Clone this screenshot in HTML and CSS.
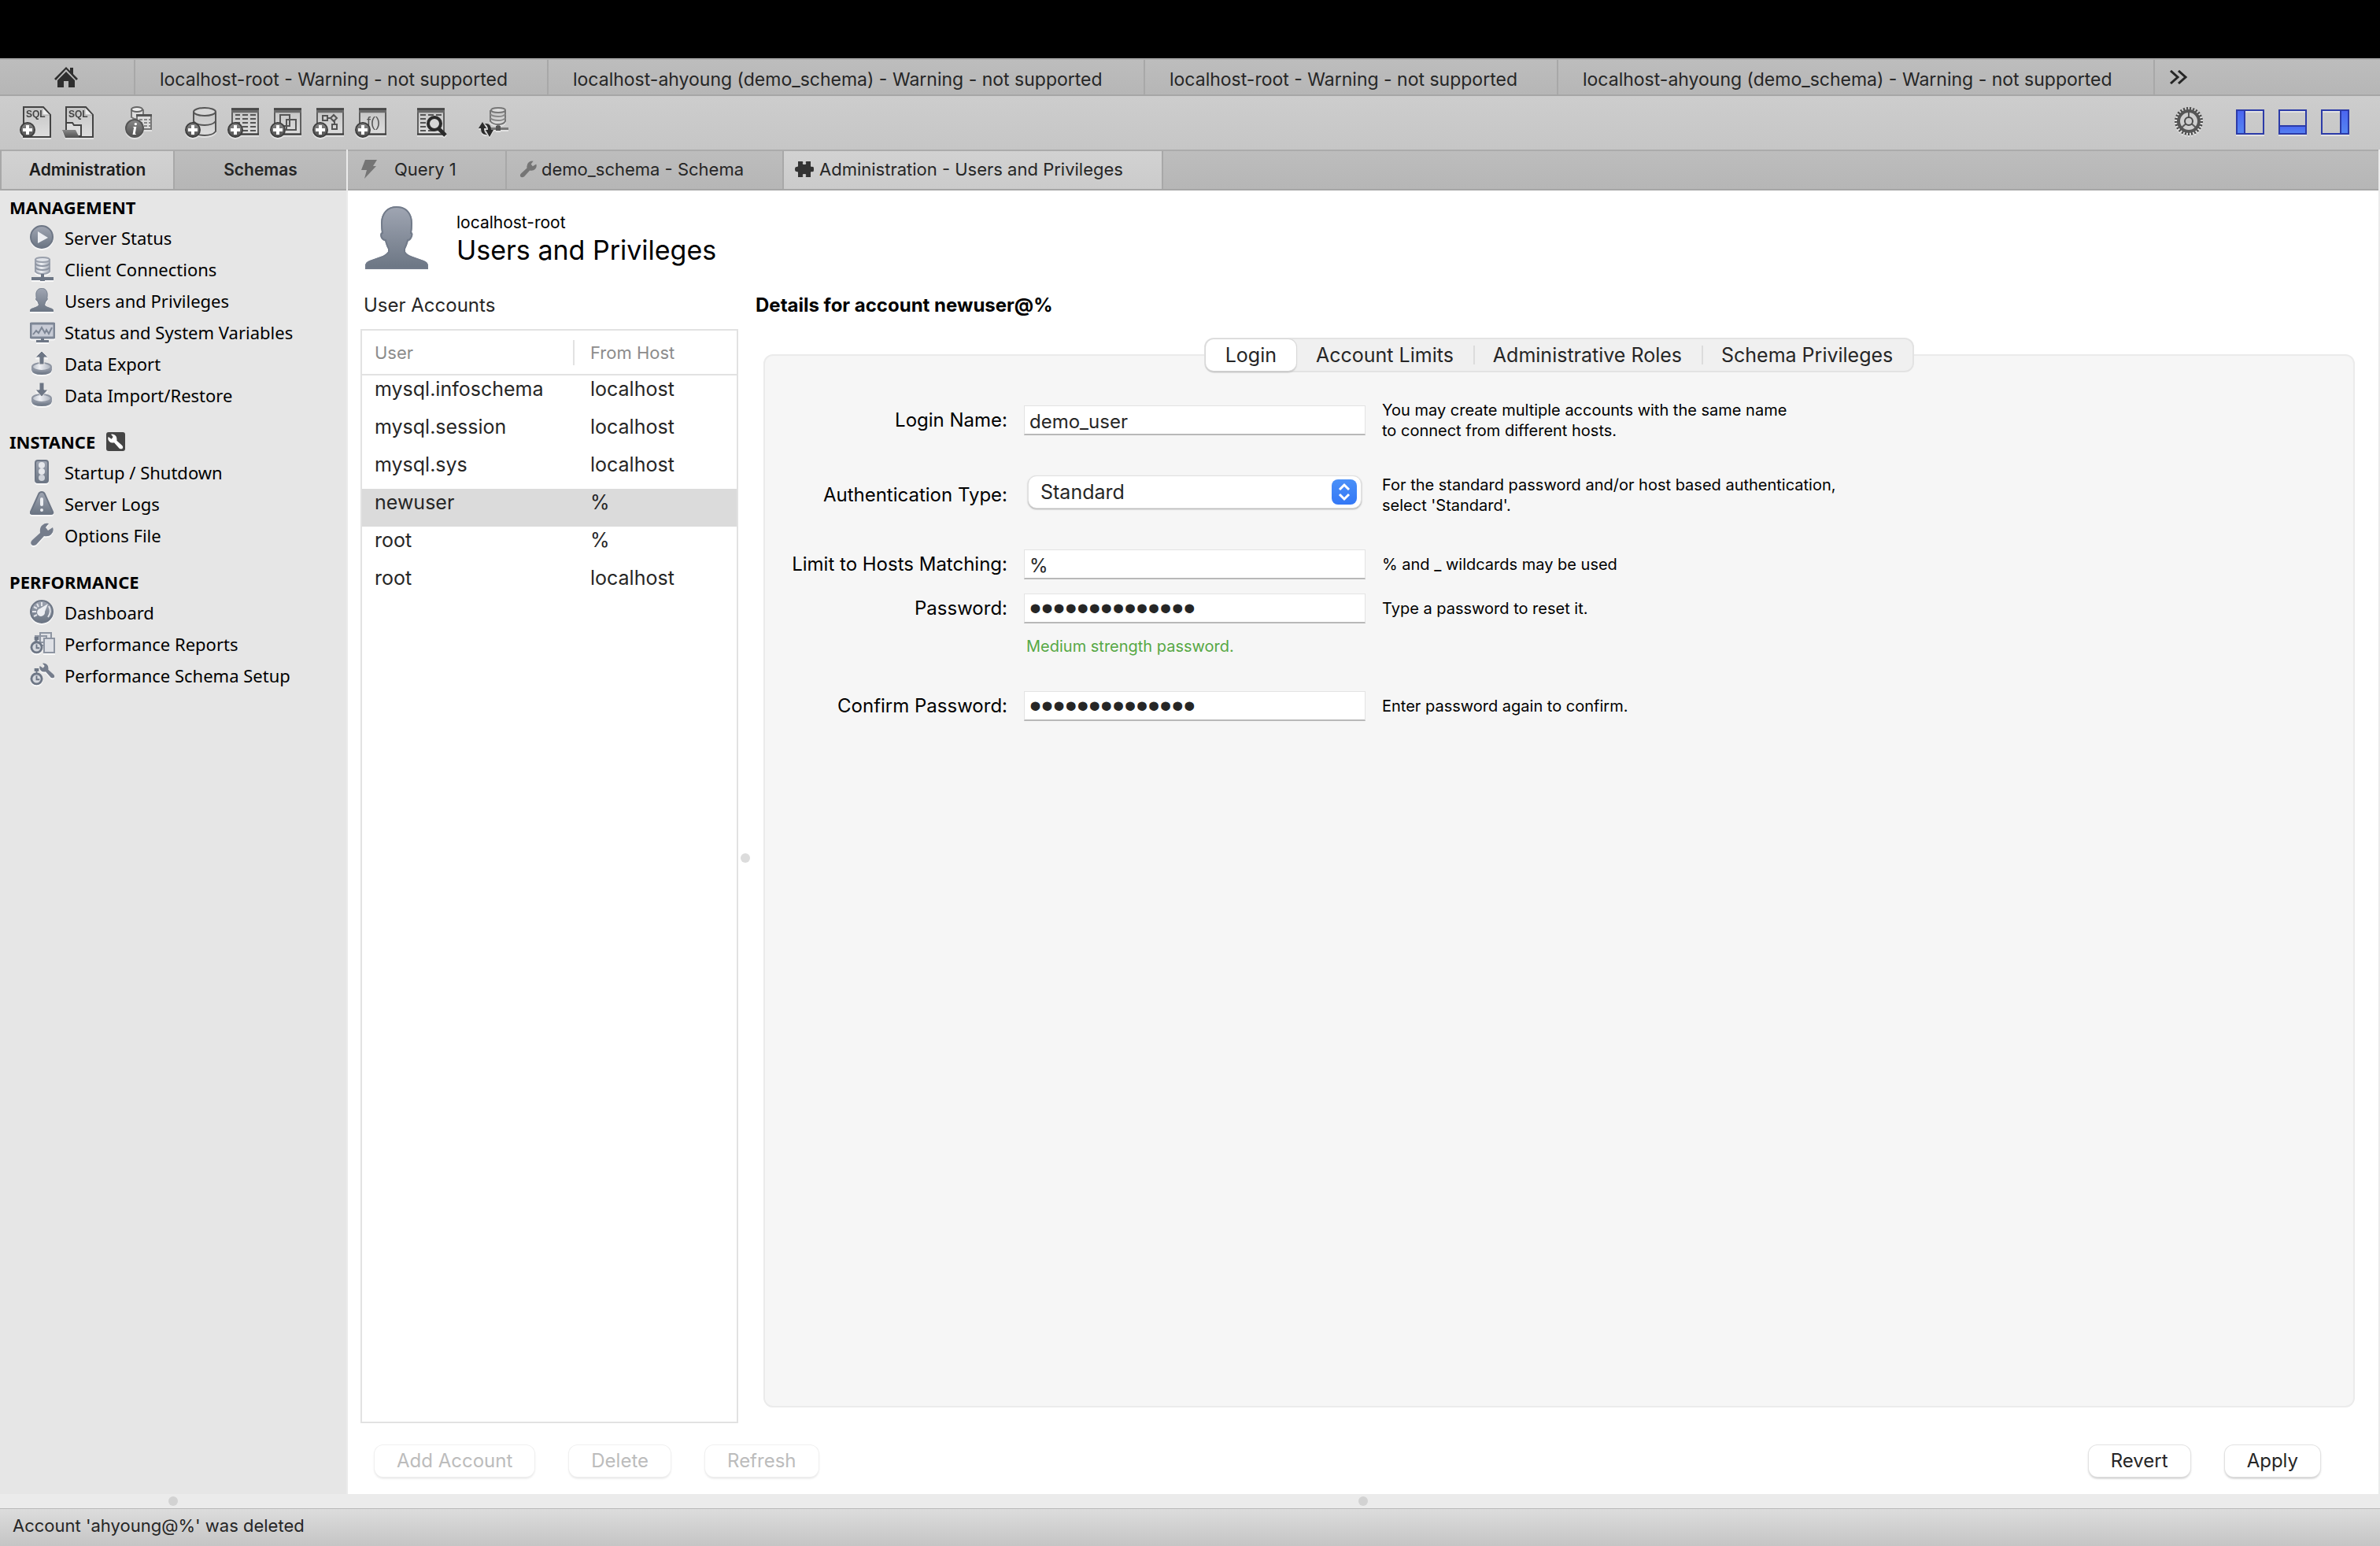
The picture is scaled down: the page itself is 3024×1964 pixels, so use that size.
FILE: index.html
```html
<!DOCTYPE html>
<html lang="en">
<head>
<meta charset="utf-8">
<title>Administration - Users and Privileges</title>
<link rel="stylesheet" href="styles.css">
</head>
<body>
<svg class="defs" aria-hidden="true">
  <defs>
    <linearGradient id="slate" x1="0" y1="0" x2="0" y2="1"><stop offset="0" stop-color="#a0a6b3"/><stop offset="1" stop-color="#6b7583"/></linearGradient>
    <linearGradient id="silver" x1="0" y1="0" x2="1" y2="0"><stop offset="0" stop-color="#b9bec8"/><stop offset=".4" stop-color="#eef0f4"/><stop offset="1" stop-color="#a9afba"/></linearGradient>
    <linearGradient id="paper" x1="0" y1="0" x2="0" y2="1"><stop offset="0" stop-color="#c4c4c4"/><stop offset="1" stop-color="#dedede"/></linearGradient>
    <linearGradient id="dark" x1="0" y1="0" x2="0" y2="1"><stop offset="0" stop-color="#8a8a8a"/><stop offset="1" stop-color="#505050"/></linearGradient>
    <linearGradient id="blue" x1="0" y1="0" x2="0" y2="1"><stop offset="0" stop-color="#4a63f0"/><stop offset="1" stop-color="#5687f2"/></linearGradient>
    <symbol id="plus" viewBox="0 0 20 20"><circle cx="10" cy="10" r="9" fill="url(#dark)" stroke="#3f3f3f" stroke-width="2"/><path d="M8 4h4v4h4v4h-4v4H8v-4H4V8h4z" fill="#fff"/></symbol>
    <symbol id="frame" viewBox="0 0 36 36"><rect x="1" y="1" width="34" height="33" fill="url(#paper)" stroke="#5c5c5c" stroke-width="2"/><path d="M0 0h36v6H0z" fill="#6a6a6a"/><path d="M0 0h36v2H0zM0 33h36v2H0z" fill="#3c3c3c"/></symbol>
    <symbol id="page" viewBox="0 0 36 40"><path d="M1 1h25l9 10v28H1z" fill="url(#paper)" stroke="#444" stroke-width="2"/><path d="M25 2v9h9" fill="#eee" stroke="#aaa"/><text x="4" y="14" class="glyph-text" font-size="12" font-weight="bold" fill="#444">SQL</text></symbol>
    <symbol id="wrench" viewBox="0 0 30 30"><path d="M3 22 13 13Q12 6 16 3Q19 0 24 1L20 6L23 10L29 6Q31 11 27 15Q24 18 18 17L8 28Q4 30 2 28Q0 25 3 22z"/></symbol>
    <symbol id="person" viewBox="0 0 80 80"><path d="M40 0C28 0 20 9 20 22Q20 29 21 33Q18 34 20 40Q22 44 25 44Q27 51 29 54V58Q26 62 20 64L6 69Q0 71 0 76V80H80V76Q80 71 74 69L60 64Q52 62 51 58V54Q53 50 55 44Q58 44 60 38Q61 33 59 33Q60 29 60 22C60 9 52 0 40 0z" fill="url(#slate)"/><path d="M40 1C28 1 21 9 21 22Q21 29 22 34Q19 35 21 40Q23 43 26 43Q28 51 30 54V58Q26 63 20 65L6 70Q1 72 1 76V79H79V76Q79 72 74 70L60 65Q52 62 50 58V54Q52 50 54 43Q57 43 59 38Q60 34 58 34Q59 29 59 22C59 9 52 1 40 1z" fill="none" stroke="#727b8a" stroke-width="2"/></symbol>
    <symbol id="watch" viewBox="0 0 18 24"><circle cx="9" cy="15" r="7" fill="#d6d9df" stroke="#6d7685" stroke-width="3"/><path d="M6 1h6v4H6zM8 4h2v5H8z" fill="#6d7685"/><path d="M9 11v5h4" fill="none" stroke="#6d7685" stroke-width="2"/></symbol>
    <symbol id="disk" viewBox="0 0 26 16"><path d="M0 6v4q1 6 13 6t13-6V6z" fill="url(#slate)"/><ellipse cx="13" cy="6" rx="12" ry="5" fill="url(#silver)" stroke="#8e95a2" stroke-width="2"/></symbol>
  </defs>
</svg>

<div class="screen-top"></div>

<nav class="connections" aria-label="Connections">
  <button class="home" aria-label="Home">
    <svg width="30" height="26" viewBox="0 0 30 26"><path d="M15 0 20 5V1h4v8l6 6-2 2L15 3 2 17l-2-2z"/><path d="M15 6 26 17v9h-8v-8h-6v8H4v-9z"/></svg>
  </button>
  <button class="connection short">localhost-root - Warning - not supported</button>
  <button class="connection long">localhost-ahyoung (demo_schema) - Warning - not supported</button>
  <button class="connection short">localhost-root - Warning - not supported</button>
  <button class="connection long">localhost-ahyoung (demo_schema) - Warning - not supported</button>
  <button class="more" aria-label="More connections">
    <svg width="24" height="18" viewBox="0 0 24 18"><path d="M2 1l9 8-9 8M12 1l9 8-9 8"/></svg>
  </button>
</nav>

<div class="toolbar" role="toolbar">
  <div class="tools">
    <button aria-label="New SQL tab"><svg viewBox="0 0 40 40"><use href="#page" x="4" width="36" height="40"/><use href="#plus" y="20" width="20" height="20"/></svg></button>
    <button aria-label="Open SQL script"><svg viewBox="0 0 40 40"><use href="#page" x="4" width="36" height="40"/><path d="M5 21h8l2 3h9v14H5z" fill="#ddd" stroke="#444" stroke-width="2"/><path d="M0 30h17l5 10H4z" fill="url(#dark)"/></svg></button>
  </div>
  <div class="tools">
    <button aria-label="Inspector"><svg viewBox="0 0 40 40"><path d="M10 4v10q7 5 15 0V4" fill="#ddd" stroke="#777" stroke-width="2"/><ellipse cx="17" cy="4" rx="7" ry="3" fill="#eee" stroke="#666" stroke-width="2"/><path d="M17 11h18v18H17z" fill="#ddd" stroke="#777" stroke-width="2"/><path d="M16 10h20v3H16z" fill="#555"/><path d="M20 17h14M20 21h14M20 25h14" stroke="#888" stroke-width="2" stroke-dasharray="4 2"/><circle cx="14" cy="28" r="11" fill="url(#dark)" stroke="#555" stroke-width="2"/><text x="11" y="36" font-family="Liberation Serif, serif" font-size="22" font-weight="bold" font-style="italic" fill="#fff">i</text></svg></button>
  </div>
  <div class="tools">
    <button aria-label="New schema"><svg viewBox="0 0 40 40"><path d="M11 7v25q4 5 14 5t14-5V7" fill="url(#paper)" stroke="#555" stroke-width="2"/><path d="M11 19q4 5 14 5t14-5" fill="none" stroke="#555" stroke-width="2"/><ellipse cx="25" cy="7" rx="14" ry="5" fill="#d6d6d6" stroke="#555" stroke-width="2"/><use href="#plus" y="20" width="20" height="20"/></svg></button>
    <button aria-label="New table"><svg viewBox="0 0 40 40"><use href="#frame" x="5" y="2" width="35" height="36"/><path d="M10 11h6M10 16h6M10 21h6M19 11h7M19 16h7M19 21h7M19 26h7M19 31h7M29 11h7M29 16h7M29 21h7M29 26h7M29 31h7" stroke="#555" stroke-width="2"/><use href="#plus" y="20" width="20" height="20"/></svg></button>
    <button aria-label="New view"><svg viewBox="0 0 40 40"><use href="#frame" x="5" y="2" width="35" height="36"/><path d="M13 11h12v14H13zM21 17h12v13H21z" fill="none" stroke="#555" stroke-width="2"/><use href="#plus" y="20" width="20" height="20"/></svg></button>
    <button aria-label="New routine"><svg viewBox="0 0 40 40"><use href="#frame" x="5" y="2" width="35" height="36"/><path d="M13 12h6v6h-6zM25 23h6v6h-6zM27 11l4 4-4 4-4-4zM20 15h3M28 19v4" fill="none" stroke="#555" stroke-width="2"/><use href="#plus" y="20" width="20" height="20"/></svg></button>
    <button aria-label="New function"><svg viewBox="0 0 40 40"><use href="#frame" x="5" y="2" width="35" height="36"/><text x="15" y="26" class="glyph-text" font-size="18" fill="#555">f()</text><use href="#plus" y="20" width="20" height="20"/></svg></button>
  </div>
  <div class="tools">
    <button aria-label="Search data"><svg viewBox="0 0 40 40"><use href="#frame" x="1" y="2" width="35" height="36"/><path d="M5 11h7M5 16h7M5 21h7M5 26h7M5 31h7M15 11h7M15 31h7M25 11h7" stroke="#555" stroke-width="2"/><circle cx="23" cy="22" r="8" fill="#d6d6d6" stroke="#2b2b2b" stroke-width="4"/><path d="M28 28l9 9" stroke="#2b2b2b" stroke-width="5"/></svg></button>
  </div>
  <div class="tools">
    <button aria-label="Reconnect"><svg viewBox="0 0 40 40"><path d="M16 5v14q3 4 10 4t9-4V5" fill="url(#paper)" stroke="#777" stroke-width="2"/><path d="M16 10q3 3 10 3t9-3M16 15q3 3 10 3t9-3" fill="none" stroke="#888" stroke-width="2"/><ellipse cx="26" cy="5" rx="9" ry="3" fill="#ddd" stroke="#777" stroke-width="2"/><path d="M24 22h4v5h11v3H17v-3h7z" fill="#777"/><path d="M23 25h6v6h-6z" fill="#555"/><path d="M1 28 6 20l5 8H8q0 6 4 8-8 1-8-8zM20 30l-5 9-5-9h3q0-5-4-8 8-1 8 8z" fill="#2b2b2b"/></svg></button>
  </div>
  <div class="panel-toggles">
    <button aria-label="Preferences"><svg class="gear" viewBox="0 0 36 40"><circle cx="18" cy="19" r="16" fill="none" stroke="#4a4a4a" stroke-width="4" stroke-dasharray="2 2"/><circle cx="18" cy="19" r="13" fill="#cfcfcf" stroke="#555" stroke-width="4"/><path d="M18 8v11M18 19l-9 8M18 19l9 8" stroke="#5a5a5a" stroke-width="2"/><circle cx="18" cy="19" r="5" fill="#ccc" stroke="#4a4a4a" stroke-width="2"/></svg></button>
    <button aria-label="Toggle sidebar"><svg class="layout" viewBox="0 0 36 32"><path d="M0 0h12v32H0z" fill="url(#blue)"/><path d="M1 1h34v30H1zM11 1v30" fill="none" stroke="#2c3ba8" stroke-width="2"/></svg></button>
    <button aria-label="Toggle output"><svg class="layout" viewBox="0 0 36 32"><path d="M0 20h36v12H0z" fill="url(#blue)"/><path d="M1 1h34v30H1zM1 21h34" fill="none" stroke="#2c3ba8" stroke-width="2"/></svg></button>
    <button aria-label="Toggle secondary sidebar"><svg class="layout" viewBox="0 0 36 32"><path d="M24 0h12v32H24z" fill="url(#blue)"/><path d="M1 1h34v30H1zM25 1v30" fill="none" stroke="#2c3ba8" stroke-width="2"/></svg></button>
  </div>
</div>

<div class="workspace">
  <aside class="sidebar">
    <div class="sidebar-tabs">
      <button class="selected">Administration</button>
      <button>Schemas</button>
    </div>
    <nav class="sidebar-nav">
      <section>
        <h2>MANAGEMENT</h2>
        <a href="#status"><svg viewBox="0 0 32 32"><circle cx="15" cy="15" r="14" fill="url(#slate)" stroke="#6d7685" stroke-width="2"/><path d="M10 8v15l13-7z" fill="#eceef2"/></svg>Server Status</a>
        <a href="#clients"><svg viewBox="0 0 32 32"><path d="M7 4v15q3 3 9 3t9-3V4z" fill="url(#silver)" stroke="#9aa0ac" stroke-width="2"/><path d="M7 9q3 3 9 3t9-3M7 14q3 3 9 3t9-3" fill="none" stroke="#8e95a2" stroke-width="2"/><ellipse cx="16" cy="4" rx="9" ry="3" fill="#dfe2e8" stroke="#9aa0ac" stroke-width="2"/><path d="M14 22h4v4h12v4H19v1h-6v-1H2v-4h12z" fill="#6d7685"/></svg>Client Connections</a>
        <a href="#users"><svg viewBox="0 0 32 32"><use href="#person" width="30" height="30"/></svg>Users and Privileges</a>
        <a href="#variables"><svg viewBox="0 0 32 32"><rect x="1" y="5" width="30" height="18" rx="1" fill="#c8ccd6" stroke="#7d8695" stroke-width="3"/><path d="M4 19l4-5 3 3 4-7 4 7 2-4 3 5 4-8" fill="none" stroke="#7d8695" stroke-width="2"/><path d="M14 24h4v2h6v3H8v-3h6z" fill="#6d7685"/></svg>Status and System Variables</a>
        <a href="#export"><svg viewBox="0 0 32 32"><use href="#disk" x="2" y="14" width="26" height="16"/><path d="M15 0l8 8h-5v9h-6V8H7z" fill="#6d7685" stroke="#e6e6e6"/></svg>Data Export</a>
        <a href="#import"><svg viewBox="0 0 32 32"><use href="#disk" x="2" y="14" width="26" height="16"/><path d="M12 0h6v9h5l-8 9-8-9h5z" fill="#6d7685" stroke="#e6e6e6"/></svg>Data Import/Restore</a>
      </section>
      <section>
        <h2>INSTANCE <svg class="badge" viewBox="0 0 24 24"><rect width="24" height="24" rx="3" fill="#454545"/><use href="#wrench" x="2" y="2" width="20" height="20" fill="#fff" transform="matrix(-1 0 0 1 24 0)"/></svg></h2>
        <a href="#startup"><svg viewBox="0 0 32 32"><rect x="7" y="1" width="16" height="28" rx="3" fill="url(#slate)" stroke="#6d7685" stroke-width="2"/><g fill="#e6e8ec"><circle cx="15" cy="7" r="4"/><circle cx="15" cy="15" r="4"/><circle cx="15" cy="23" r="4" fill="#cfd3da"/></g></svg>Startup / Shutdown</a>
        <a href="#logs"><svg viewBox="0 0 32 32"><path d="M15 1q3 0 4 3l10 22q1 3-2 3H3q-3 0-2-3L11 4q1-3 4-3z" fill="url(#slate)" stroke="#6d7685" stroke-width="2"/><rect x="13" y="8" width="4" height="11" rx="2" fill="#eceef2"/><circle cx="15" cy="24" r="2" fill="#eceef2"/></svg>Server Logs</a>
        <a href="#options"><svg viewBox="0 0 32 32"><use href="#wrench" width="30" height="30" fill="#757d8c"/></svg>Options File</a>
      </section>
      <section>
        <h2>PERFORMANCE</h2>
        <a href="#dashboard"><svg viewBox="0 0 32 32"><circle cx="15" cy="15" r="14" fill="url(#slate)" stroke="#6d7685" stroke-width="2"/><path d="M5 21l4-2M3 15h5M5 9l4 2M9 5l2 4M15 3v5M24 8q4 7-1 14" fill="none" stroke="#e2e4e9" stroke-width="2"/><path d="M23 5 19 15a5 5 0 1 1-6-4z" fill="#eceef2"/></svg>Dashboard</a>
        <a href="#reports"><svg viewBox="0 0 32 32"><path d="M13 2h14v12H13zM7 6h14v12H7z" fill="#dfe1e6" stroke="#8e95a2" stroke-width="2"/><path d="M18 9h13v18H18z" fill="#dfe1e6" stroke="#8e95a2" stroke-width="2"/><use href="#watch" x="0" y="6" width="17" height="23"/></svg>Performance Reports</a>
        <a href="#setup"><svg viewBox="0 0 32 32"><use href="#wrench" x="0" width="20" height="20" fill="#757d8c" transform="matrix(-1 0 0 1 32 0)"/><use href="#watch" x="0" y="6" width="17" height="23"/></svg>Performance Schema Setup</a>
      </section>
    </nav>
  </aside>

  <main class="editor">
    <div class="editor-tabs">
      <button class="query"><svg width="20" height="24" viewBox="0 0 20 24"><path d="M5 0h15l-5 8h4L4 24l3-11H0z"/></svg>Query 1</button>
      <button class="schema"><svg width="22" height="22" viewBox="0 0 30 30"><use href="#wrench" width="30" height="30"/></svg>demo_schema - Schema</button>
      <button class="admin selected"><svg width="24" height="20" viewBox="0 0 24 20"><path d="M4 0h5q2 0 1 2-1 2 2 2t2-2q-1-2 1-2h5v6q0 1 2 1 2-1 2 3t-2 3q-2 0-2 1v6h-5q-2 0-1-2 1-2-2-2t-2 2q1 2-1 2H4v-6q0-1-2-1-2 0-2-3t2-3q2 0 2-1z"/></svg>Administration - Users and Privileges</button>
    </div>

    <header class="page-header">
      <svg viewBox="0 0 80 80"><use href="#person" width="80" height="80"/></svg>
      <div>
        <p>localhost-root</p>
        <h1>Users and Privileges</h1>
      </div>
    </header>

    <div class="columns">
      <section class="accounts">
        <h2>User Accounts</h2>
        <div class="account-list">
          <table>
            <thead><tr><th>User</th><th>From Host</th></tr></thead>
            <tbody>
              <tr><td>mysql.infoschema</td><td>localhost</td></tr>
              <tr><td>mysql.session</td><td>localhost</td></tr>
              <tr><td>mysql.sys</td><td>localhost</td></tr>
              <tr class="selected"><td>newuser</td><td>%</td></tr>
              <tr><td>root</td><td>%</td></tr>
              <tr><td>root</td><td>localhost</td></tr>
            </tbody>
          </table>
        </div>
      </section>
      <div class="splitter"><span class="grip"></span></div>
      <section class="details">
        <h2>Details for account newuser@%</h2>
        <div class="panel">
          <div class="segments">
            <button class="selected">Login</button>
            <button>Account Limits</button>
            <button>Administrative Roles</button>
            <button>Schema Privileges</button>
          </div>
          <form>
            <div class="field">
              <label for="login">Login Name:</label>
              <input id="login" type="text" value="demo_user">
              <p>You may create multiple accounts with the same name<br>to connect from different hosts.</p>
            </div>
            <div class="field">
              <label for="auth">Authentication Type:</label>
              <div class="select">
                <select id="auth"><option>Standard</option></select>
                <svg width="32" height="32" viewBox="0 0 32 32"><path d="M10 13l6-6 6 6M10 19l6 6 6-6"/></svg>
              </div>
              <p>For the standard password and/or host based authentication,<br>select 'Standard'.</p>
            </div>
            <div class="field">
              <label for="hosts">Limit to Hosts Matching:</label>
              <input id="hosts" type="text" value="%">
              <p>% and _ wildcards may be used</p>
            </div>
            <div class="field close">
              <label for="password">Password:</label>
              <input id="password" type="password" value="12345678901234">
              <p>Type a password to reset it.</p>
            </div>
            <p class="strength">Medium strength password.</p>
            <div class="field">
              <label for="confirm">Confirm Password:</label>
              <input id="confirm" type="password" value="12345678901234">
              <p>Enter password again to confirm.</p>
            </div>
          </form>
        </div>
      </section>
    </div>

    <footer class="actions">
      <button disabled>Add Account</button>
      <button disabled>Delete</button>
      <button disabled>Refresh</button>
      <button class="revert">Revert</button>
      <button>Apply</button>
    </footer>
  </main>
</div>

<div class="bottom-splitters">
  <div><span class="grip"></span></div>
  <div><span class="grip"></span></div>
</div>
<footer class="status">Account 'ahyoung@%' was deleted</footer>
</body>
</html>
```
FILE: styles.css
```css
* { box-sizing: border-box; }

body {
  margin: 0;
  min-height: 100vh;
  display: flex;
  flex-direction: column;
  font-family: Inter, "Liberation Sans", sans-serif;
  font-size: 25px;
  line-height: 30px;
  color: #262626;
  background: #ebebeb;
}

h1, h2, p { margin: 0; font-weight: 400; }
button, input, select { font: inherit; color: inherit; margin: 0; }
button { border: 0; padding: 0; background: none; white-space: nowrap; }
svg { display: block; flex: none; }
.defs { position: absolute; width: 0; height: 0; }
.glyph-text { font-family: "Liberation Sans", sans-serif; }

.screen-top { height: 74px; background: #000; }

/* Connection tabs */
.connections {
  display: flex;
  height: 48px;
  border-top: 2px solid #ababab;
  border-bottom: 2px solid #a6a6a6;
  background: linear-gradient(#bdbdbd, #b6b6b6);
  font-size: 23px;
}
.connections button { border-right: 2px solid #a8a8a8; display: flex; align-items: center; }
.connections .home { width: 172px; justify-content: center; padding-right: 2px; fill: #2e2e2e; }
.connections .connection { padding: 6px 0 0 31px; overflow: hidden; }
.connections .short { width: 525px; }
.connections .long { width: 758px; }
.connections .more { border: 0; padding: 0 0 0 18px; }
.more path { fill: none; stroke: #262626; stroke-width: 3; }

/* Toolbar */
.toolbar {
  display: flex;
  align-items: center;
  gap: 38px;
  height: 68px;
  padding: 0 39px 2px 25px;
  background: linear-gradient(#cdcdcd, #c6c6c6);
}
.tools { display: flex; gap: 14px; }
.toolbar svg { filter: drop-shadow(0 2px 0 #e2e2e2); }
.tools svg { width: 40px; height: 40px; }
.panel-toggles { display: flex; align-items: center; gap: 18px; margin-left: auto; }
.gear { width: 36px; height: 40px; margin-right: 24px; }
.layout { width: 36px; height: 32px; }

/* Workspace */
.workspace { flex: 1; display: flex; padding-right: 2px; }
.sidebar { width: 442px; flex: none; background: #e6e6e6; border-right: 2px solid #ebebeb; }
.sidebar-tabs, .editor-tabs {
  display: flex;
  height: 52px;
  border-top: 2px solid #ababab;
  border-bottom: 2px solid #a6a6a6;
  background: linear-gradient(#bdbdbd, #b6b6b6);
}
.sidebar-tabs { border-left: 2px solid #a8a8a8; font-size: 21px; font-weight: 600; }
.sidebar-tabs button { flex: 1; }
.sidebar-tabs .selected { border-right: 2px solid #a8a8a8; color: #1c1c1c; }
.sidebar-tabs .selected, .editor-tabs .selected { background: linear-gradient(#d2d2d2, #cbcbcb); }

.sidebar-nav {
  display: flex;
  flex-direction: column;
  gap: 19px;
  padding-top: 1px;
  font-family: "Noto Sans", sans-serif;
  font-size: 22px;
  color: #000;
}
.sidebar-nav h2 {
  display: flex;
  align-items: center;
  gap: 14px;
  height: 39px;
  padding-left: 12px;
  font-size: 22px;
  font-weight: 700;
}
.badge { width: 24px; height: 24px; }
.sidebar-nav a {
  display: flex;
  align-items: center;
  gap: 12px;
  height: 40px;
  padding-left: 38px;
  color: inherit;
  text-decoration: none;
  white-space: nowrap;
}
.sidebar-nav a svg { width: 32px; height: 32px; filter: drop-shadow(0 2px 0 #f8f8f8); }

/* Editor */
.editor { flex: 1; min-width: 0; display: flex; flex-direction: column; background: #fff; }
.editor-tabs { font-size: 22px; }
.editor-tabs button { display: flex; align-items: center; border-right: 2px solid #a8a8a8; padding-bottom: 3px; }
.editor-tabs .query { width: 202px; padding-left: 17px; gap: 22px; fill: #757575; }
.editor-tabs .schema { width: 352px; padding-left: 16px; gap: 6px; fill: #757575; }
.editor-tabs .admin { width: 482px; padding-left: 14px; gap: 7px; fill: #333; }

.page-header { display: flex; gap: 36px; padding: 20px 22px 30px; color: #000; }
.page-header svg { width: 80px; height: 80px; }
.page-header p { padding-top: 6px; font-size: 21px; }
.page-header h1 { font-size: 34px; line-height: 40px; }

.columns { flex: 1; display: flex; padding-left: 16px; }
.columns h2 { font-size: 24px; line-height: 32px; }
.accounts { width: 480px; display: flex; flex-direction: column; }
.accounts h2 { padding-left: 4px; margin-bottom: 14px; }
.account-list { flex: 1; border: 2px solid #e2e2e2; }
.account-list table { width: 100%; border-collapse: collapse; table-layout: fixed; }
th {
  height: 56px;
  padding: 0 0 0 20px;
  border-bottom: 2px solid #e2e2e2;
  text-align: left;
  font-size: 22px;
  font-weight: 400;
  color: #8c8c8c;
}
th:first-child {
  width: 270px;
  padding-left: 16px;
  background: linear-gradient(#e2e2e2, #e2e2e2) right center / 2px 32px no-repeat;
}
td { height: 48px; padding: 2px 0 16px 20px; }
td:first-child { padding-left: 16px; }
tr.selected { background: #dbdbdb; }

.splitter { width: 22px; padding-right: 4px; display: flex; align-items: center; justify-content: center; }
.grip { width: 12px; height: 12px; border-radius: 50%; background: #dcdcdc; }

.details { flex: 1; display: flex; flex-direction: column; }
.details h2 { font-weight: 700; color: #000; }
.panel {
  flex: 1;
  margin: 46px 30px 20px 10px;
  border: 2px solid #ebebeb;
  border-radius: 12px;
  background: #f6f6f6;
}
.segments {
  display: flex;
  width: max-content;
  height: 44px;
  margin: -23px auto 35px;
  border: 2px solid #e3e3e3;
  border-radius: 12px;
  background: #f0f0f0;
}
.segments button { padding: 0 25px; }
.segments .selected {
  border-radius: 10px;
  background: #fff;
  box-shadow: 0 0 0 1px #d8d8d8, 0 2px 2px #b4b4b4;
}
.segments button:nth-child(n+3) { background: linear-gradient(#dcdcdc, #dcdcdc) left center / 2px 24px no-repeat; }

form { display: flex; flex-direction: column; color: #000; }
.field { display: flex; align-items: center; gap: 21px; margin-bottom: 43px; }
.field label { width: 308px; text-align: right; font-size: 24px; }
.field input, .select { width: 434px; }
.field input {
  height: 38px;
  padding: 3px 6px 0;
  border: 1px solid #e3e3e3;
  border-bottom: 2px solid #b8b8b8;
  background: #fff;
  font-size: 24px;
  color: #262626;
}
.field input[type="password"] { padding-top: 0; font-family: "Liberation Sans", sans-serif; font-size: 43px; }
.field p { font-size: 20px; line-height: 26px; }
.field:has(+ .close) { margin-bottom: 18px; }
.field.close { margin-bottom: 14px; }
.strength { padding-left: 332px; margin-bottom: 42px; font-size: 20px; color: #56a845; }
.select { position: relative; padding: 0 5px; align-self: flex-start; }
.select select {
  appearance: none;
  display: block;
  width: 100%;
  height: 42px;
  margin-top: 1px;
  padding: 0 15px;
  border: 1px solid #e0e0e0;
  border-radius: 11px;
  background: #fff;
  box-shadow: 0 1px 2px #a8a8a8;
  color: #262626;
}
.select svg {
  position: absolute;
  right: 11px;
  top: 6px;
  border-radius: 8px;
  background: linear-gradient(#4a90f8, #3478f6);
  fill: none;
  stroke: #fff;
  stroke-width: 3;
  pointer-events: none;
}

.actions { display: flex; gap: 44px; padding: 28px 74px 22px 34px; }
.actions button {
  height: 40px;
  padding: 0 28px;
  border-radius: 11px;
  background: #fff;
  box-shadow: 0 0 0 1px #e2e2e2, 0 2px 3px #bcbcbc;
  font-size: 24px;
}
.actions button:disabled { color: #bcbcbc; box-shadow: 0 0 0 1px #f0f0f0, 0 2px 3px #e0e0e0; }
.actions .revert { margin-left: auto; }

/* Bottom edge */
.bottom-splitters { display: flex; height: 18px; }
.bottom-splitters div { flex: 1; display: flex; align-items: center; justify-content: center; }
.bottom-splitters div:first-child { flex: none; width: 440px; }
.bottom-splitters .grip { background: #d2d2d2; }
.status {
  height: 48px;
  padding: 6px 16px;
  border-top: 1px solid #b9b9b9;
  background: linear-gradient(#dcdcdc, #c5c5c5);
  font-size: 22px;
}
```
